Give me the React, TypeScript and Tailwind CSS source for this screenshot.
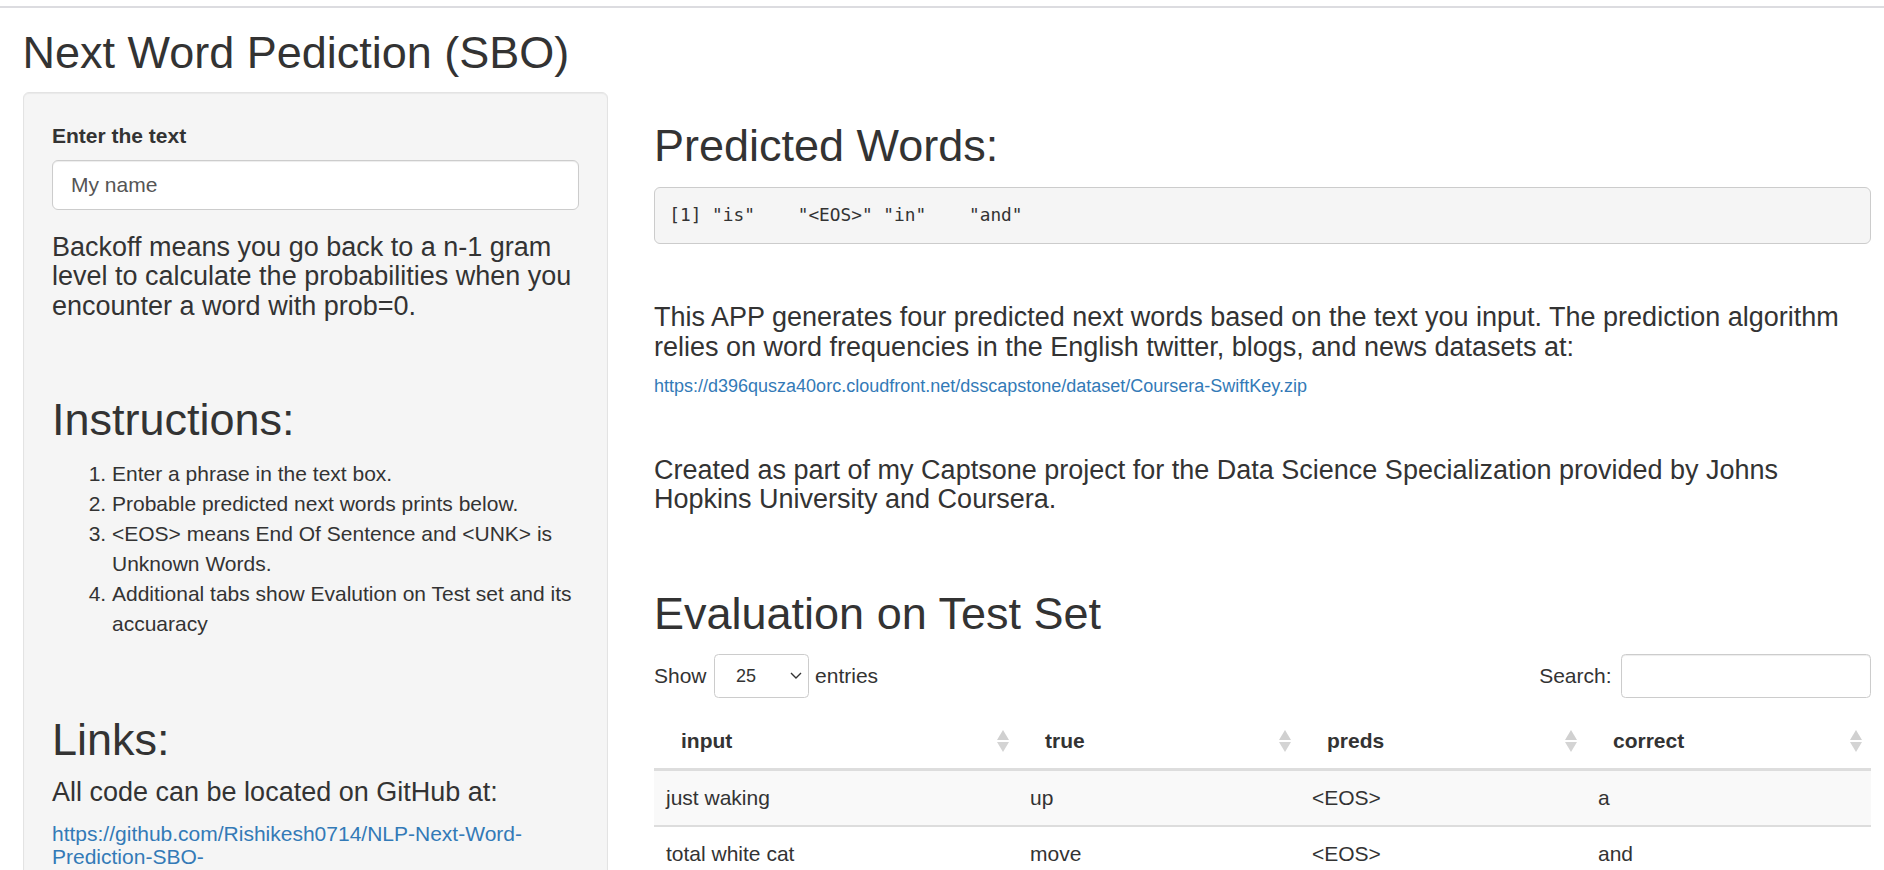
import React from 'react';

const INSTRUCTIONS = [
  'Enter a phrase in the text box.',
  'Probable predicted next words prints below.',
  '<EOS> means End Of Sentence and <UNK> is Unknown Words.',
  'Additional tabs show Evalution on Test set and its accuaracy',
];

const ROWS = [
  { input: 'just waking', truth: 'up', preds: '<EOS>', correct: 'a' },
  { input: 'total white cat', truth: 'move', preds: '<EOS>', correct: 'and' },
  { input: 'to the', truth: 'point', preds: 'end', correct: 'the' },
  { input: 'i love', truth: 'you', preds: 'you', correct: 'it' },
];

const SortIcon: React.FC = () => (
  <svg width="12" height="22" viewBox="0 0 12 22" className="shrink-0">
    <path d="M6 0 L12 10 L0 10 Z" fill="#d0d0d0" />
    <path d="M0 12 L12 12 L6 22 Z" fill="#d4d4d4" />
  </svg>
);

const App: React.FC = () => {
  return (
    <div className="h-[870px] overflow-hidden bg-white text-[#333] font-['Liberation_Sans',Arial,sans-serif]">
      <div className="h-[6px]" />
      <div className="h-[2px] bg-[#dcdce0]" />

      <div className="px-[22.5px]">
        <h2 className="mt-[19.7px] mb-[14.8px] text-[45px] leading-[49.5px] font-normal">Next Word Pediction (SBO)</h2>

        <div className="flex items-start gap-[46px]">
          {/* sidebar */}
          <div className="w-[585.5px] shrink-0 bg-[#f5f5f5] border border-[#e3e3e3] rounded-[6px] p-[28.5px] shadow-[inset_0_1px_1px_rgba(0,0,0,0.05)]">
            <label className="block text-[21px] leading-[30px] font-bold">Enter the text</label>
            <input
              readOnly
              value="My name"
              className="mt-[8.5px] block w-full h-[50px] bg-white border border-[#ccc] rounded-[6px] px-[18px] text-[21px] text-[#555] outline-none shadow-[inset_0_1px_1px_rgba(0,0,0,0.075)] font-['Liberation_Sans',Arial,sans-serif]"
            />
            <h4 className="mt-[23px] text-[27px] leading-[29.3px] font-normal">
              Backoff means you go back to a n-1 gram level to calculate the probabilities when you encounter a word with prob=0.
            </h4>

            <h2 className="mt-[74.5px] text-[45px] leading-[49.5px] font-normal">Instructions:</h2>
            <ol className="mt-[14px] list-decimal pl-[60px] text-[21px] leading-[30px]">
              {INSTRUCTIONS.map(item => (
                <li key={item}>{item}</li>
              ))}
            </ol>

            <h2 className="mt-[76px] text-[45px] leading-[49.5px] font-normal">Links:</h2>
            <h4 className="mt-[14px] text-[27px] leading-[29.7px] font-normal">All code can be located on GitHub at:</h4>
            <h5 className="mt-[14px] text-[21px] leading-[23px] font-normal">
              <a className="text-[#337ab7]">https://github.com/Rishikesh0714/NLP-Next-Word-Prediction-SBO-</a>
            </h5>
          </div>

          {/* main */}
          <div className="w-[1217px] shrink-0">
            <h2 className="mt-[29.5px] text-[45px] leading-[49.5px] font-normal">Predicted Words:</h2>
            <pre className="mt-[16px] bg-[#f5f5f5] border border-[#ccc] rounded-[6px] px-[14.25px] py-[14.25px] text-[17.8px] leading-[26.5px] text-[#333] font-['DejaVu_Sans_Mono',monospace] whitespace-pre">
              {'[1] "is"    "<EOS>" "in"    "and"  '}
            </pre>

            <h4 className="mt-[59.1px] text-[27px] leading-[29.7px] font-normal">
              This APP generates four predicted next words based on the text you input. The prediction algorithm relies on word frequencies in the English twitter, blogs, and news datasets at:
            </h4>
            <h6 className="mt-[14.4px] text-[18px] leading-[19.8px] font-normal">
              <a className="text-[#337ab7]">https://d396qusza40orc.cloudfront.net/dsscapstone/dataset/Coursera-SwiftKey.zip</a>
            </h6>

            <h4 className="mt-[59.1px] text-[27px] leading-[29.7px] font-normal">
              Created as part of my Captsone project for the Data Science Specialization provided by Johns Hopkins University and Coursera.
            </h4>

            <h2 className="mt-[73.8px] text-[45px] leading-[49.5px] font-normal">Evaluation on Test Set</h2>

            <div className="mt-[15.5px] h-[44px] flex items-center justify-between text-[21px] leading-[30px]">
              <div className="flex items-center">
                <span>Show</span>
                <div className="ml-[7.5px] w-[95px] h-[44px] bg-white border border-[#ccc] rounded-[4.5px] flex items-center justify-between pl-[21px] pr-[6px] text-[18px]">
                  <span>25</span>
                  <svg width="12" height="7" viewBox="0 0 12 7">
                    <path d="M1 1 L6 6 L11 1" fill="none" stroke="#333" strokeWidth="1.4" />
                  </svg>
                </div>
                <span className="ml-[6px]">entries</span>
              </div>
              <div className="flex items-center">
                <span>Search:</span>
                <div className="ml-[9.5px] w-[250px] h-[44px] bg-white border border-[#ccc] rounded-[4.5px] shadow-[inset_0_1px_1px_rgba(0,0,0,0.075)]" />
              </div>
            </div>

            <table className="mt-[16.5px] w-full table-fixed border-collapse text-[21px] leading-[30px]">
              <colgroup>
                <col className="w-[364px]" />
                <col className="w-[282px]" />
                <col className="w-[286px]" />
                <col />
              </colgroup>
              <thead>
                <tr>
                  {['input', 'true', 'preds', 'correct'].map(h => (
                    <th key={h} className="pl-[27px] pr-[9px] py-[12px] text-left font-bold border-b-[3px] border-[#ddd]">
                      <div className="flex items-center justify-between">
                        <span>{h}</span>
                        <SortIcon />
                      </div>
                    </th>
                  ))}
                </tr>
              </thead>
              <tbody>
                {ROWS.map((r, i) => (
                  <tr key={r.input} className={i % 2 === 0 ? 'bg-[#f9f9f9]' : 'bg-white'}>
                    <td className={i === 0 ? 'px-[12px] py-[12px]' : 'px-[12px] py-[12px] border-t-2 border-[#ddd]'}>{r.input}</td>
                    <td className={i === 0 ? 'px-[12px] py-[12px]' : 'px-[12px] py-[12px] border-t-2 border-[#ddd]'}>{r.truth}</td>
                    <td className={i === 0 ? 'px-[12px] py-[12px]' : 'px-[12px] py-[12px] border-t-2 border-[#ddd]'}>{r.preds}</td>
                    <td className={i === 0 ? 'px-[12px] py-[12px]' : 'px-[12px] py-[12px] border-t-2 border-[#ddd]'}>{r.correct}</td>
                  </tr>
                ))}
              </tbody>
            </table>
          </div>
        </div>
      </div>
    </div>
  );
};

export default App;
